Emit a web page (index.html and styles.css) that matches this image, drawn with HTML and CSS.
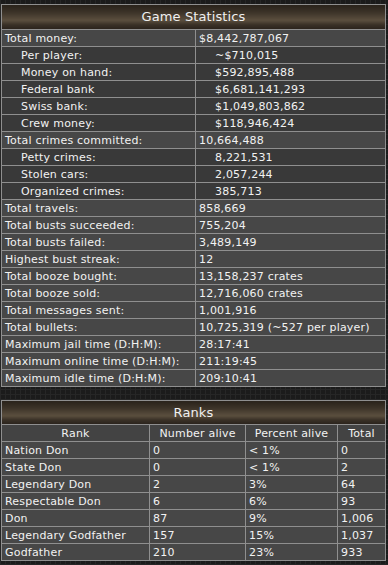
FILE: index.html
```html
<!DOCTYPE html>
<html>
<head>
<meta charset="utf-8">
<link rel="stylesheet" href="styles.css">
</head>
<body>
<table class="stats">
  <colgroup><col class="s1"><col class="s2"></colgroup>
  <tr><th colspan="2" class="title">Game Statistics</th></tr>
  <tr><td>Total money:</td><td>$8,442,787,067</td></tr>
  <tr class="sub"><td>Per player:</td><td>~$710,015</td></tr>
  <tr class="sub"><td>Money on hand:</td><td>$592,895,488</td></tr>
  <tr class="sub"><td>Federal bank</td><td>$6,681,141,293</td></tr>
  <tr class="sub"><td>Swiss bank:</td><td>$1,049,803,862</td></tr>
  <tr class="sub"><td>Crew money:</td><td>$118,946,424</td></tr>
  <tr><td>Total crimes committed:</td><td>10,664,488</td></tr>
  <tr class="sub"><td>Petty crimes:</td><td>8,221,531</td></tr>
  <tr class="sub"><td>Stolen cars:</td><td>2,057,244</td></tr>
  <tr class="sub"><td>Organized crimes:</td><td>385,713</td></tr>
  <tr><td>Total travels:</td><td>858,669</td></tr>
  <tr><td>Total busts succeeded:</td><td>755,204</td></tr>
  <tr><td>Total busts failed:</td><td>3,489,149</td></tr>
  <tr><td>Highest bust streak:</td><td>12</td></tr>
  <tr><td>Total booze bought:</td><td>13,158,237 crates</td></tr>
  <tr><td>Total booze sold:</td><td>12,716,060 crates</td></tr>
  <tr><td>Total messages sent:</td><td>1,001,916</td></tr>
  <tr><td>Total bullets:</td><td>10,725,319 (~527 per player)</td></tr>
  <tr><td>Maximum jail time (D:H:M):</td><td>28:17:41</td></tr>
  <tr><td>Maximum online time (D:H:M):</td><td>211:19:45</td></tr>
  <tr><td>Maximum idle time (D:H:M):</td><td>209:10:41</td></tr>
</table>

<table class="ranks">
  <colgroup><col class="r1"><col class="r2"><col class="r3"><col class="r4"></colgroup>
  <tr><th colspan="4" class="title">Ranks</th></tr>
  <tr class="head"><td>Rank</td><td>Number alive</td><td>Percent alive</td><td>Total</td></tr>
  <tr><td>Nation Don</td><td>0</td><td>&lt; 1%</td><td>0</td></tr>
  <tr><td>State Don</td><td>0</td><td>&lt; 1%</td><td>2</td></tr>
  <tr><td>Legendary Don</td><td>2</td><td>3%</td><td>64</td></tr>
  <tr><td>Respectable Don</td><td>6</td><td>6%</td><td>93</td></tr>
  <tr><td>Don</td><td>87</td><td>9%</td><td>1,006</td></tr>
  <tr><td>Legendary Godfather</td><td>157</td><td>15%</td><td>1,037</td></tr>
  <tr><td>Godfather</td><td>210</td><td>23%</td><td>933</td></tr>
</table>
</body>
</html>
```

FILE: styles.css
```css
html, body {
  margin: 0;
  height: 100%;
}
body {
  padding: 4px 2px 0 1px;
  box-sizing: border-box;
  background-color: #1b1b1b;
  background-image:
    repeating-linear-gradient(90deg, #262626 0, #262626 1px, transparent 1px, transparent 5px),
    repeating-linear-gradient(0deg, #262626 0, #262626 1px, transparent 1px, transparent 5px);
  font-family: "DejaVu Sans", Verdana, sans-serif;
  font-size: 11px;
  color: #f2f2f2;
}
table {
  width: 385px;
  border-collapse: collapse;
  border: 1px solid #8f8f8f;
  table-layout: fixed;
}
td, th {
  border: 1px solid #8f8f8f;
  padding: 2px 0 0 3px;
  height: 14px;
  line-height: 14px;
  letter-spacing: 0.2px;
  white-space: nowrap;
  overflow: hidden;
  background: #474747;
}
.title {
  padding: 0;
  height: 23px;
  line-height: 23px;
  font-size: 13px;
  font-weight: normal;
  letter-spacing: 0.1px;
  text-align: center;
  color: #f0f0f0;
  background: linear-gradient(180deg, #2a231b 0%, #3d3429 30%, #5b4f3e 62%, #3a3127 80%, #29221b 100%);
}
.stats .title { height: 24px; line-height: 24px; }
.s1 { width: 194px; }
.stats .sub td { background: #393939; padding-left: 19px; }
.ranks { margin-top: 13px; }
.r1 { width: 148px; }
.r2 { width: 96px; }
.r3 { width: 92px; }
.ranks .head td { text-align: center; padding-left: 0; background: #434343; }
```
